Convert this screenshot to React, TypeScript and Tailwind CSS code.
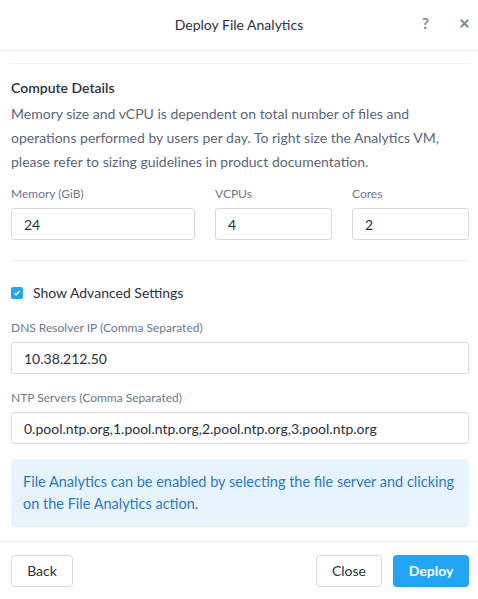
import { X } from "lucide-react";

const font = { fontFamily: "Lato, 'Open Sans', sans-serif" };

function Field({ label, value, className = "" }: { label: string; value: string; className?: string }) {
  return (
    <div className={className}>
      <div className="text-[12px] leading-[16px] text-[#6b788a]">{label}</div>
      <div className="mt-[6px] h-[32px] rounded-[3px] border border-[#d5d9df] px-[12px] flex items-center text-[14px] text-[#2b313a]">
        {value}
      </div>
    </div>
  );
}

export default function App() {
  return (
    <div className="w-[478px] h-[599px] bg-white flex flex-col" style={font}>
      <div className="h-[51px] border-b border-[#eef0f2] flex items-center relative shrink-0">
        <div className="flex-1 text-center text-[14px] text-[#2b313a] -mt-[2px]">Deploy File Analytics</div>
        <div className="absolute right-[7px] top-0 h-full flex items-center gap-[29px] -mt-[2px]">
          <span className="text-[15px] font-bold text-[#7d8a99]">?</span>
          <X size={13} strokeWidth={3.5} className="text-[#7d8a99]" />
        </div>
      </div>

      <div className="flex-1 pl-[11px] pr-[9px] pt-[12px]">
        <div className="border-t border-[#eef0f2]" />
        <div className="mt-[15px] text-[14px] font-semibold text-[#2b313a] leading-[18px]">Compute Details</div>
        <p className="mt-[5px] text-[14px] leading-[24px] text-[#5b6676]">
          Memory size and vCPU is dependent on total number of files and operations performed by users per day. To
          right size the Analytics VM, please refer to sizing guidelines in product documentation.
        </p>
        <div className="mt-[12px] flex gap-[20px]">
          <Field label="Memory (GiB)" value="24" className="flex-1" />
          <Field label="VCPUs" value="4" className="w-[117px]" />
          <Field label="Cores" value="2" className="w-[117px]" />
        </div>
        <div className="mt-[20px] border-t border-[#eef0f2]" />

        <label className="mt-[21px] flex items-center gap-[10px]">
          <span className="w-[12px] h-[12px] rounded-[2px] bg-[#22a5f7] flex items-center justify-center">
            <svg width="8" height="8" viewBox="0 0 8 8">
              <path d="M1.5 4.2 L3.2 5.8 L6.5 2.2" stroke="white" strokeWidth="1.5" fill="none" />
            </svg>
          </span>
          <span className="text-[14px] text-[#2b313a]">Show Advanced Settings</span>
        </label>

        <Field label="DNS Resolver IP (Comma Separated)" value="10.38.212.50" className="mt-[17px]" />
        <Field
          label="NTP Servers (Comma Separated)"
          value="0.pool.ntp.org,1.pool.ntp.org,2.pool.ntp.org,3.pool.ntp.org"
          className="mt-[16px]"
        />

        <div className="mt-[15px] rounded-[4px] bg-[#e8f4fd] pl-[12px] pr-[12px] py-[12px] text-[14.5px] leading-[22px] text-[#2a79c9]">
          File Analytics can be enabled by selecting the file server and clicking on the File Analytics action.
        </div>
      </div>

      <div className="h-[58px] border-t border-[#eef0f2] pl-[11px] pr-[9px] flex items-center shrink-0">
        <button className="h-[32px] w-[62px] rounded-[4px] border border-[#d5d9df] text-[14px] text-[#2b313a]">Back</button>
        <div className="flex-1" />
        <button className="h-[32px] w-[66px] rounded-[4px] border border-[#d5d9df] text-[14px] text-[#2b313a]">Close</button>
        <button className="ml-[11px] h-[32px] w-[76px] rounded-[4px] bg-[#22a5f7] text-[14px] font-bold text-white">Deploy</button>
      </div>
    </div>
  );
}
